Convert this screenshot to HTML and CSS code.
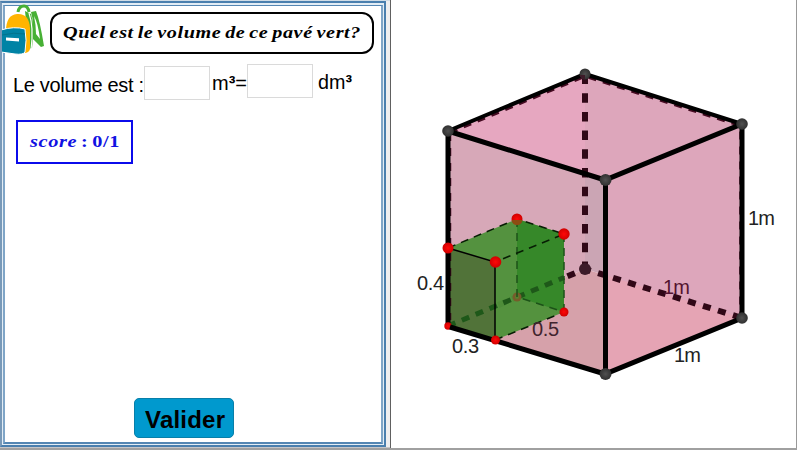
FILE: index.html
```
<!DOCTYPE html>
<html lang="fr">
<head>
<meta charset="utf-8">
<title>Volume du pavé</title>
<link rel="stylesheet" href="styles.css">
</head>
<body>
<main class="app">
  <section class="exercise">
    <div class="frame"><div class="content">
      <header class="header">
        <svg class="bag" viewBox="0 0 44 52" width="44" height="52">
          <path d="M16 9Q17 3 22 3Q26 3 27 9" fill="none" stroke="#47b035" stroke-width="3"/>
          <path d="M23 8L29 11Q33 23 30 45L27 46Z" fill="#47b035"/>
          <path d="M29 9L34 8Q38 18 42 43L39 44L29 34Q33 22 29 9Z" fill="#47b035"/>
          <path d="M32 13Q36 20 38 36L34 31Q34 22 32 13Z" fill="#fff"/>
          <path d="M27 10Q32 24 29 47" fill="none" stroke="#fff" stroke-width="1.200"/>
          <path d="M4 28Q4 12 15 11Q27 10 28 25L28 46Q27 50 22 50L4 48Z" fill="#ffb400"/>
          <path d="M-1 27Q12 23 23 26Q25 37 23 49Q21 52 13 51L-1 49Z" fill="#0083a5" stroke="#fff"/>
          <path d="M0 32Q12 29 23 31" fill="none" stroke="#02738d"/>
          <path d="M4 34.500l13 .8v3.300l-13-1z" fill="#fff"/>
        </svg>
        <h1 class="title"><svg width="320" height="38" viewBox="0 0 320 38"><text class="math" x="11" y="24" textLength="298" lengthAdjust="spacingAndGlyphs">Quel est le volume de ce pavé vert?</text></svg></h1>
      </header>
      <div class="answer">
        <svg class="words" width="131" height="34"><text x="0" y="28" textLength="131">Le volume est :</text></svg>
        <input class="field" aria-label="m³">
        <svg class="unit" width="37" height="34"><text x="2" y="26" textLength="35" lengthAdjust="spacingAndGlyphs">m<tspan class="cube">³</tspan>=</text></svg>
        <input class="field raised" aria-label="dm³">
        <svg class="last" width="40" height="34"><text x="5" y="25" textLength="34" lengthAdjust="spacingAndGlyphs">dm<tspan class="cube">³</tspan></text></svg>
      </div>
      <div class="score"><svg width="113" height="40"><text class="math" x="12" y="25" textLength="90" lengthAdjust="spacingAndGlyphs">score<tspan class="digits"> : 0/1</tspan></text></svg></div>
      <button class="submit"><svg width="98" height="36"><text x="10" y="28" textLength="80">Valider</text></svg></button>
    </div></div>
  </section>
  <section class="view">
    <svg class="scene" viewBox="391 0 405 448" width="405" height="448">
      <defs>
        <radialGradient id="dark"><stop offset="0" stop-color="#505050"/><stop offset="1" stop-color="#303030"/></radialGradient>
        <radialGradient id="red"><stop offset="0" stop-color="#ff0808"/><stop offset="1" stop-color="#d00000"/></radialGradient>
      </defs>
      <path fill="#e6a7c0" d="M448 131L585 74V174L448 131z"/>
      <path fill="#dda6bb" d="M585 74L742 124V318L605 374V180L585 174z"/>
      <path fill="#d7a8b8" d="M448 131L585 174V269L448 326z"/>
      <path fill="#cba5b4" d="M585 174L605 180V275L585 269z"/>
      <path fill="#d6a1aa" d="M448 326L585 269L605 275V374z"/>
      <path fill="#e5a4b4" d="M605 275L742 318L605 374z"/>
      <g class="hidden">
        <path d="M585 74V269" stroke-dasharray="9.500 9.200" stroke-dashoffset="-0.500"/>
        <path d="M585 269L448 326" stroke-dasharray="8 7" stroke-dashoffset="4"/>
        <path d="M585 269L742 318" stroke-dasharray="8 7.700" stroke-dashoffset="2"/>
      </g>
      <circle cx="585" cy="269" r="6" fill="#3d1b29"/>
      <text class="dim behind" x="663" y="294" textLength="27">1m</text>
      <path fill="#50923b" fill-opacity=".97" d="M448 248L517 219L564 234V312L495 340L448 326z"/>
      <path fill="#368829" d="M517 219L564 234V312L517 297z"/>
      <path fill="#517339" d="M448 248L495 262V340L448 326z"/>
      <path class="covered" d="M448 326L564 277.500"/>
      <circle cx="517" cy="297" r="4.500" fill="#765c2b"/><circle cx="517" cy="297" r="2" fill="#59802d"/>
      <g class="thin">
        <path class="far" d="M517 219V297L564 312"/>
        <path d="M448 248L517 219L564 234L495 262M495 340L564 312"/>
        <path class="far" d="M564 234V312"/>
        <path class="solid" d="M448 248L495 262V340"/>
      </g>
      <g class="shade"><path d="M450 133L585 76.500L740.500 126V316M450 133V320"/></g>
      <path class="upper" d="M448 131L585 74L742 124"/>
      <path class="edge" d="M448 131V326"/>
      <circle cx="448" cy="326" r="3.700" fill="url(#red)"/>
      <path class="edge" d="M448 131L605 180L742 124V318L605 374L450 327M605.500 180V374"/>
      <g fill="url(#dark)">
        <circle cx="585" cy="74" r="5.500"/><circle cx="448" cy="131" r="5.800"/><circle cx="742" cy="124" r="5.800"/><circle cx="605.500" cy="180" r="6"/><circle cx="742" cy="318" r="5.800"/><circle cx="605.500" cy="374" r="6"/>
      </g>
      <g fill="url(#red)">
        <circle cx="517" cy="219" r="5.500"/><circle cx="448" cy="248" r="5.500"/><circle cx="564" cy="234" r="5.700"/><circle cx="495.500" cy="262" r="5.800"/><circle cx="564" cy="312" r="4.500"/><circle cx="495.500" cy="340" r="4.500"/>
      </g>
      <path d="M511.500 220h11q-1 5-5.500 5t-5.500-5" fill="#8c4c12"/>
      <path d="M579.500 75h5.500v4.500q-4 0-5.500-4.500" fill="#3d1b29"/>
      <g class="dim">
        <text x="417" y="289.500" textLength="27">0.4</text><text x="452" y="353" textLength="27">0.3</text>
        <text class="behind" x="532" y="335.500" textLength="27">0.5</text>
        <text x="748" y="225" textLength="27">1m</text><text x="674" y="362" textLength="27">1m</text>
      </g>
    </svg>
  </section>
</main>
</body>
</html>
```
FILE: styles.css
```
* { box-sizing: border-box; }
body { margin: 0; font-family: "Liberation Sans", sans-serif; background: #fff; }
svg { display: block; flex: none; }
.app { display: flex; width: 797px; height: 450px; border-bottom: 2px solid #a0a0a0; overflow: hidden; }
.exercise { width: 391px; height: 448px; padding: 1px 4px 1px 0; background: linear-gradient(#d0dce6 0 1px, #eeeeef 1px 447px, #c5c5c8 447px); border-right: 1px solid #606060; }
.frame { height: 446px; border: 2px solid #4a7fae; border-left-color: #7899b8; padding: 2px 1px 1px; background: #e3edf5; }
.content { height: 439px; border: 2px solid #7fa5c7; border-top: 1px solid #5486b3; border-bottom-color: #5486b3; background: #fff; display: flex; flex-direction: column; }
.header { display: flex; height: 49px; margin-left: -3px; }
.bag { margin-top: -3px; }
.title { width: 324px; height: 42px; margin: 6px 0 0 4px; border: 2px solid #000; border-radius: 12px; }
.math { font: italic bold 17px "Liberation Serif", serif; word-spacing: -1.5px; letter-spacing: .5px; }
.digits { font-style: normal; }
.answer { display: flex; height: 36px; margin: 9px 0 0 8px; }
.words, .unit, .last { font-size: 20px; }
.cube { font-weight: bold; }
.field { width: 66px; height: 34px; margin-top: 2px; padding: 4px; border: 1.5px solid #dadada; background: #fff; }
.raised { margin-top: 0; }
.score { width: 117px; height: 44px; margin: 20px 0 0 11px; border: 2px solid #0b0beb; }
.score .math { fill: #1111e2; }
.submit { width: 100px; height: 40px; margin: auto 0 4px 129px; padding: 0; border: 1px solid #087fa9; border-radius: 5px; background: #0099ce; font: bold 24px "Liberation Sans", sans-serif; color: #000; }
.view { width: 406px; border-right: 1px solid #999; }
.hidden { fill: none; stroke: #300817; stroke-width: 6; }
.covered { fill: none; stroke: #1e5819; stroke-width: 5; stroke-dasharray: 8 7; }
.thin { fill: none; stroke: #071e04; stroke-width: 1.5; stroke-dasharray: 8 6; }
.far { stroke: #1c5218; }
.solid { stroke: #000; stroke-dasharray: none; }
.shade { fill: none; stroke: #450a21; stroke-width: 2.5; stroke-dasharray: 8 7; }
.upper { fill: none; stroke: #000; stroke-width: 4; }
.edge { fill: none; stroke: #000; stroke-width: 5; }
.dim { font-size: 20px; fill: #222; }
.behind { fill: #54142f; }
.dim .behind { fill: #41242e; }
```
